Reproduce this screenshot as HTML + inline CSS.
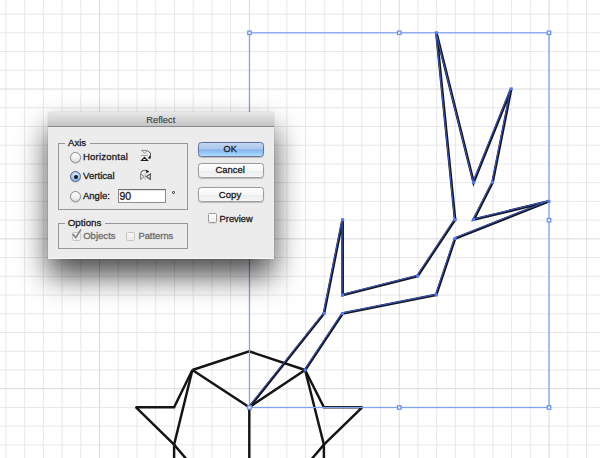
<!DOCTYPE html>
<html><head><meta charset="utf-8">
<style>
html,body{margin:0;padding:0;}
body{width:600px;height:458px;overflow:hidden;background:#fff;position:relative;font-family:"Liberation Sans",sans-serif;}
svg.art{position:absolute;left:0;top:0;}
#dlg{position:absolute;left:48px;top:112px;width:226px;height:147px;background:#ececec;
  border-radius:3px 3px 0 0;box-shadow:0 17px 30px rgba(0,0,0,0.7),0 0 1px rgba(0,0,0,0.4),inset 0 -1px 0 #f9f9f9;}
#title{position:absolute;left:0;top:0;width:226px;height:14px;border-radius:3px 3px 0 0;
  background:linear-gradient(#e8e8e8,#d6d6d6 50%,#c4c4c4);border-bottom:1px solid #8a8a8a;}
.t{position:absolute;white-space:nowrap;line-height:10px;-webkit-text-stroke:0.3px currentColor;}
.grp{position:absolute;border:1px solid #969696;}
.gap{position:absolute;background:#ececec;height:3px;}
.radio{position:absolute;width:9px;height:9px;border-radius:50%;border:1px solid #8c8c8c;
  background:linear-gradient(#ffffff,#f2f2f2 50%,#e2e2e2);box-shadow:0 0.5px 1px rgba(0,0,0,0.25);}
.radio.on{background:radial-gradient(circle at 50% 35%,#e0f0ff,#9cc8f2 55%,#5c9ae0);border-color:#56698c;}
.radio.on:after{content:"";position:absolute;left:2.5px;top:2.5px;width:4px;height:4px;border-radius:50%;background:#151515;}
.btn{position:absolute;border:1px solid #9c9c9c;border-radius:3.5px;
  background:linear-gradient(#ffffff,#f7f7f7 50%,#ececec 51%,#f6f6f6);box-shadow:0 0.5px 1px rgba(0,0,0,0.2);}
.btn.def{border-color:#66709f;background:linear-gradient(#c2d6f0,#abc7ec 46%,#86b6ec 52%,#98cbf6 80%,#b3ddfb);}
.chk{position:absolute;border:1px solid #9a9a9a;border-radius:1.5px;background:linear-gradient(#fff,#efefef);box-shadow:0 0.5px 0.5px rgba(0,0,0,0.15);}
.chk.dis{border-color:#c6c6c6;background:linear-gradient(#f6f6f6,#eaeaea);box-shadow:none;}
</style></head><body>
<svg class="art" width="600" height="458" viewBox="0 0 600 458">
<path d="M5.9 0V458M24.63 0V458M43.36 0V458M62.09 0V458M80.82 0V458M118.28 0V458M137.01 0V458M155.74 0V458M174.47 0V458M193.2 0V458M211.93 0V458M230.66 0V458M268.12 0V458M286.85 0V458M305.58 0V458M324.31 0V458M343.04 0V458M361.77 0V458M380.5 0V458M417.96 0V458M436.69 0V458M455.42 0V458M474.15 0V458M492.88 0V458M511.61 0V458M530.34 0V458M567.8 0V458M586.53 0V458M0 14.1H600M0 32.83H600M0 51.56H600M0 70.29H600M0 107.75H600M0 126.48H600M0 145.21H600M0 163.94H600M0 182.67H600M0 201.4H600M0 220.13H600M0 257.59H600M0 276.32H600M0 295.05H600M0 313.78H600M0 332.51H600M0 351.24H600M0 369.97H600M0 407.43H600M0 426.16H600M0 444.89H600" stroke="#e8e8e8" stroke-width="1" fill="none"/>
<path d="M99.55 0V458M249.39 0V458M399.23 0V458M549.07 0V458M0 89.02H600M0 238.86H600M0 388.7H600" stroke="#d9d9d9" stroke-width="1" fill="none"/>
<g fill="none" stroke="#141414" stroke-width="2.45" stroke-linejoin="miter" stroke-miterlimit="4">
<path d="M192.4 370.0L249.3 351.4L305.1 370.0"/>
<path d="M192.4 370.0L249.3 407.2L305.1 370.0"/>
<path d="M249.3 407.2V470"/>
<path d="M192.4 370.0L174.1 407.2H135.8L174.1 444.6L188 461" stroke-miterlimit="2"/>
<path d="M192.4 370.0L174.1 444.6V470"/>
<path d="M305.1 370.0L323.9 407.2H362.4L323.9 444.6L310 461" stroke-miterlimit="2"/>
<path d="M305.1 370.0L323.9 444.6V470"/>
</g>
<rect x="249.5" y="32.8" width="299.5" height="374.7" fill="none" stroke="#80a1f2" stroke-width="1.25"/>
<path d="M249.3 407.2L324.0 313.5L342.6 219.7L342.6 295.0L417.6 276.0L455.1 219.6L436.4 32.8L473.6 182.3L511.2 88.8L492.6 182.3L473.7 219.6L548.9 201.3L455.1 238.4L436.2 294.9L342.6 313.5L305.1 370.0" fill="none" stroke="#14151b" stroke-width="2.7" stroke-linejoin="miter" stroke-miterlimit="4"/>
<path d="M249.3 407.2L324.0 313.5L342.6 219.7L342.6 295.0L417.6 276.0L455.1 219.6L436.4 32.8L473.6 182.3L511.2 88.8L492.6 182.3L473.7 219.6L548.9 201.3L455.1 238.4L436.2 294.9L342.6 313.5L305.1 370.0" transform="translate(-0.5 -0.5)" fill="none" stroke="#3a5cd0" stroke-width="1" stroke-linejoin="miter" stroke-miterlimit="4"/>
<g fill="#5078f0"><rect x="247.8" y="405.7" width="3" height="3"/><rect x="322.5" y="312.0" width="3" height="3"/><rect x="341.1" y="218.2" width="3" height="3"/><rect x="341.1" y="293.5" width="3" height="3"/><rect x="416.1" y="274.5" width="3" height="3"/><rect x="453.6" y="218.1" width="3" height="3"/><rect x="434.9" y="31.3" width="3" height="3"/><rect x="472.1" y="180.8" width="3" height="3"/><rect x="509.7" y="87.3" width="3" height="3"/><rect x="491.1" y="180.8" width="3" height="3"/><rect x="472.2" y="218.1" width="3" height="3"/><rect x="547.4" y="199.8" width="3" height="3"/><rect x="453.6" y="236.9" width="3" height="3"/><rect x="434.7" y="293.4" width="3" height="3"/><rect x="341.1" y="312.0" width="3" height="3"/><rect x="303.6" y="368.5" width="3" height="3"/></g>
<g fill="#fff" stroke="#6a90ee" stroke-width="1.3"><rect x="247.8" y="31.1" width="3.4" height="3.4"/><rect x="397.6" y="31.1" width="3.4" height="3.4"/><rect x="547.3" y="31.1" width="3.4" height="3.4"/><rect x="547.3" y="218.5" width="3.4" height="3.4"/><rect x="547.3" y="405.8" width="3.4" height="3.4"/><rect x="397.6" y="405.8" width="3.4" height="3.4"/><rect x="247.8" y="405.8" width="3.4" height="3.4"/><rect x="247.8" y="218.5" width="3.4" height="3.4"/></g>
</svg>
<div id="dlg">
<div id="title"></div>

<div class="t" style="left:98.3px;top:3px;font-size:9.3px;color:#383838;-webkit-text-stroke:0.1px #383838;">Reflect</div>
<div class="grp" style="left:10.0px;top:31.0px;width:128.0px;height:65.0px;"></div>
<div class="gap" style="left:16.5px;top:30px;width:25px;"></div>
<div class="t" style="left:20.0px;top:26px;font-size:9.6px;color:#1b1b1b;">Axis</div>
<div class="grp" style="left:10.0px;top:111.0px;width:128.0px;height:24.0px;"></div>
<div class="gap" style="left:16.5px;top:110px;width:40px;"></div>
<div class="t" style="left:19.7px;top:106px;font-size:9.8px;color:#1b1b1b;">Options</div>
<div class="radio" style="left:22.0px;top:40.0px;width:9.0px;height:9.0px;"></div>
<div class="radio on" style="left:22.0px;top:59.0px;width:9.0px;height:9.0px;"></div>
<div class="radio" style="left:22.0px;top:79.0px;width:9.0px;height:9.0px;"></div>
<div class="t" style="left:35.0px;top:40px;font-size:9.6px;color:#1b1b1b;letter-spacing:0.18px;">Horizontal</div>
<div class="t" style="left:35.1px;top:59px;font-size:9.6px;color:#1b1b1b;">Vertical</div>
<div class="t" style="left:35.0px;top:79px;font-size:9.5px;color:#1b1b1b;">Angle:</div>
<div style="position:absolute;left:70px;top:77px;width:46px;height:12px;border:1px solid #8e8e8e;border-top-color:#6e6e6e;background:#fff;box-shadow:inset 0 1px 1px rgba(0,0,0,0.12);"></div>
<div class="t" style="left:71.4px;top:79px;font-size:10.5px;color:#1b1b1b;">90</div>
<div style="position:absolute;left:124.2px;top:79.2px;width:1.3px;height:1.3px;border:0.9px solid #222;border-radius:50%;"></div>
<div class="chk dis" style="left:24.0px;top:120.0px;width:7.0px;height:7.0px;"></div>
<div class="chk dis" style="left:78.4px;top:119.6px;width:7.0px;height:7.0px;"></div>
<div class="chk" style="left:159.6px;top:101.0px;width:7.0px;height:7.5px;"></div>
<svg style="position:absolute;left:22px;top:116px" width="14" height="14" viewBox="0 0 14 14"><path d="M3.2 6.5L5.8 9.6L10.6 2" fill="none" stroke="#858585" stroke-width="1.7" stroke-linecap="round" stroke-linejoin="round"/></svg>
<div class="t" style="left:35.2px;top:119px;font-size:9.55px;color:#6c6c6c;">Objects</div>
<div class="t" style="left:90.4px;top:119px;font-size:9.4px;color:#6c6c6c;">Patterns</div>
<div class="btn def" style="left:149.6px;top:30.0px;width:64.4px;height:13.0px;"></div>
<div class="btn" style="left:149.6px;top:51.0px;width:64.4px;height:13.0px;"></div>
<div class="btn" style="left:149.6px;top:75.0px;width:64.4px;height:13.0px;"></div>
<div class="t" style="left:175.6px;top:32px;font-size:9.1px;color:#1b1b1b;">OK</div>
<div class="t" style="left:167.6px;top:53px;font-size:9.4px;color:#1b1b1b;">Cancel</div>
<div class="t" style="left:170.8px;top:78px;font-size:9.6px;color:#1b1b1b;">Copy</div>
<div class="t" style="left:171.6px;top:102px;font-size:9.3px;color:#1b1b1b;">Preview</div>
<svg style="position:absolute;left:90px;top:36px" width="16" height="36" viewBox="0 0 16 36">
<path d="M3.6 2.4H9.3L6.45 5.1Z" fill="none" stroke="#8a8a8a" stroke-width="1"/>
<path d="M3 7.45H9.9" stroke="#9a9a9a" stroke-width="0.9"/>
<path d="M6.45 9.3L3.5 12.5H9.5Z" fill="none" stroke="#1e1e1e" stroke-width="1.15" stroke-linejoin="miter"/>
<path d="M9.6 3.2C12.6 3.8 13.4 6.8 11.4 9" fill="none" stroke="#3a3a3a" stroke-width="1"/>
<path d="M10.2 9.9L12.6 8.1L12.3 10.6Z" fill="#111" stroke="#111" stroke-width="0.5"/>
<path d="M2.6 25.8L6.1 28.6L2.6 31.5Z" fill="none" stroke="#7a7a7a" stroke-width="1"/>
<path d="M7.2 25.4V31.6" stroke="#a0a0a0" stroke-width="0.9"/>
<path d="M12.3 25.9L8.5 28.6L12.3 31.5Z" fill="none" stroke="#444" stroke-width="1.05"/>
<path d="M2.6 25.6C3.4 22.6 6.5 21.3 9.3 23" fill="none" stroke="#6a6a6a" stroke-width="1.05"/>
<path d="M8.2 22.2L11 23.5L8.6 24.8Z" fill="#111" stroke="#111" stroke-width="0.5"/>
</svg>
</div>
</body></html>
